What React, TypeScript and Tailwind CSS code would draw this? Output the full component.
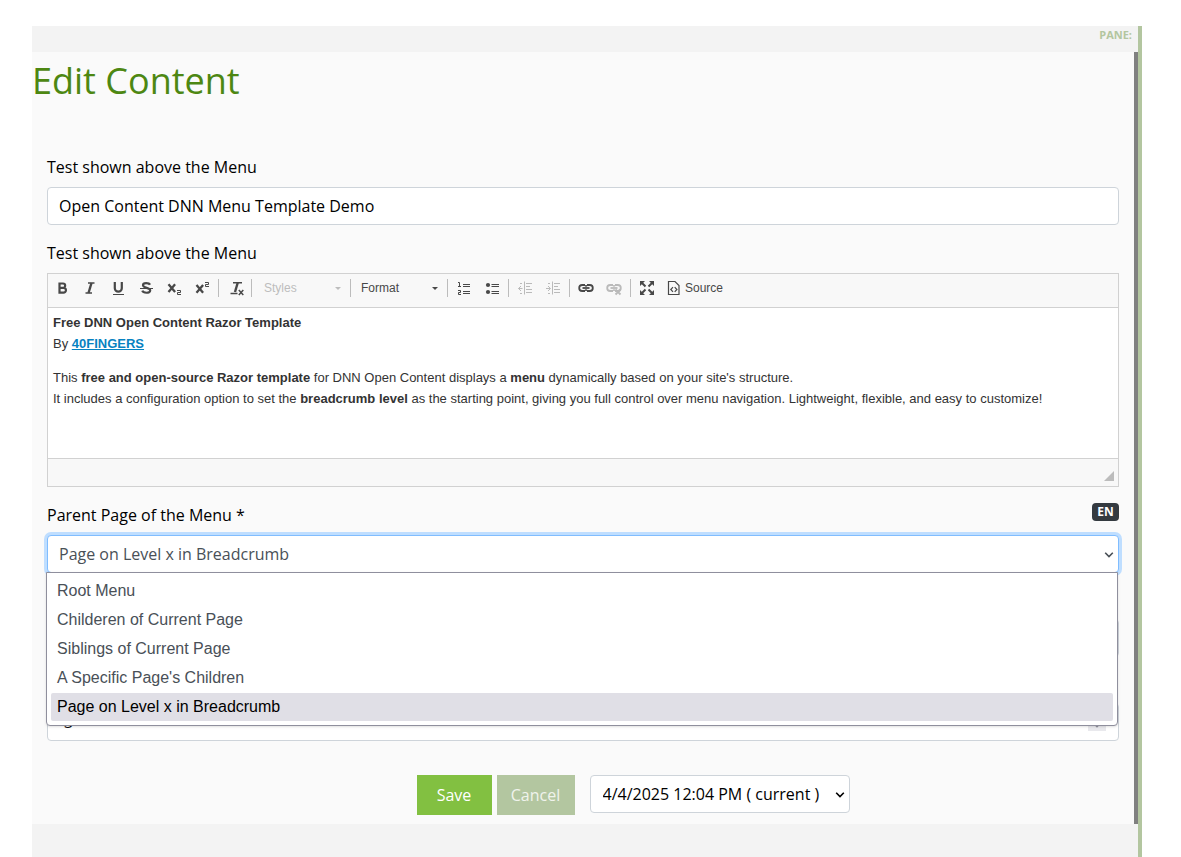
import React from "react";

const fontBody = "font-['Open_Sans',sans-serif]";

function Tool({ label, children, className = "" }: { label: string; children: React.ReactNode; className?: string }) {
  return (
    <button type="button" aria-label={label} className={`flex h-[18px] w-7 shrink-0 items-center justify-center ${className}`}>
      <svg width="16" height="16" viewBox="0 0 16 16" fill="none" stroke="#484848" strokeWidth="1">
        {children}
      </svg>
    </button>
  );
}

function Sep({ className = "" }: { className?: string }) {
  return <span className={`h-[18px] w-px shrink-0 bg-[#bcbcbc] ${className}`} />;
}

function Chevron({ className = "" }: { className?: string }) {
  return (
    <svg width="10" height="10" viewBox="0 0 10 10" fill="none" stroke="currentColor" strokeWidth="1.6" className={className}>
      <path d="M1.2 2.700 5 6.500l3.800-3.800" />
    </svg>
  );
}

function Combo({ label, className }: { label: string; className: string }) {
  return (
    <button type="button" className={`flex h-[18px] items-center justify-between text-xs ${className}`}>
      <span>{label}</span>
      <svg width="6" height="3" viewBox="0 0 6 3" fill="currentColor">
        <path d="M0 0h6L3 3z" />
      </svg>
    </button>
  );
}

function LinkShape() {
  return (
    <>
      <path d="M7 5H4.200a3 3 0 0 0 0 6H7M9 5h2.800a3 3 0 0 1 0 6H9" strokeWidth="1.800" />
      <path d="M7.400 5v1.700M8.600 5v1.700M7.400 9.300V11M8.600 9.300V11" strokeWidth="1" />
      <path d="M4.500 8h7" strokeWidth="1.800" />
    </>
  );
}

function Toolbar() {
  return (
    <div className="flex h-[34px] items-center border-b border-[#d1d1d1] bg-[#f8f8f8] pb-[5px]">
      <Tool label="Bold">
        <path d="M5.500 3.500H9a2.100 2.100 0 0 1 0 4.300H5.500zM5.500 7.800h4a2.400 2.400 0 0 1 0 4.900h-4z" strokeWidth="2.200" />
      </Tool>
      <Tool label="Italic">
        <path d="M6 3h6.500M3.500 13H10" strokeWidth="1.500" />
        <path d="M9.500 3 6.500 13" strokeWidth="2.400" />
      </Tool>
      <Tool label="Underline">
        <path d="M4.800 2v6.200a3.500 3.500 0 0 0 7 0V2" strokeWidth="2.200" />
        <path d="M3 14.500h11" />
      </Tool>
      <Tool label="Strikethrough">
        <path d="M12 4.800C11 2.600 5 2.200 5 5.200c0 3 7.200 2.300 7.200 5.200 0 3.300-7 2.900-7.900.3" strokeWidth="2.200" />
        <path d="M2 8.500h13" />
      </Tool>
      <Tool label="Subscript">
        <path d="m2.500 4.300 6.600 7.700M9.100 4.300 2.500 12" strokeWidth="2.300" />
        <path d="M11 10.500h3.500v2H11.500v2H15" />
      </Tool>
      <Tool label="Superscript">
        <path d="m2.500 5 6.600 7.700M9.100 5 2.500 12.700" strokeWidth="2.300" />
        <path d="M11 2.500h3.500v2H11.500v2H15" />
      </Tool>
      <Sep className="ml-0.5" />
      <Tool label="Remove format" className="ml-1">
        <path d="M4 2.700h9M1.500 13.500h7" strokeWidth="1.600" />
        <path d="M8.800 2.500 6 12" strokeWidth="2.400" />
        <path d="m9.800 10 4.500 5M14.300 10l-4.500 5" strokeWidth="1.500" />
      </Tool>
      <Sep />
      <Combo label="Styles" className="w-[98px] pr-[9px] pl-3 text-[#bdbdbd]" />
      <Sep />
      <Combo label="Format" className="w-[96px] pr-[9px] pl-2.5 text-[#484848]" />
      <Sep />
      <Tool label="Numbered list" className="ml-0.5">
        <path d="M7 4.500h7M7 6.500h7M7 11.500h7M7 13.500h7" strokeWidth="1.200" />
        <path d="M2 2.500h1.500v4M2 6.500h3M2 10.500h2.500v2H2.500v2H5" />
      </Tool>
      <Tool label="Bulleted list">
        <path d="M7.500 4.500H15M7.500 6.500H15M7.500 11.500H15M7.500 13.500H15" strokeWidth="1.200" />
        <circle cx="4" cy="5" r="2.100" fill="#484848" stroke="none" />
        <circle cx="4" cy="12" r="2.100" fill="#484848" stroke="none" />
      </Tool>
      <Sep className="ml-0.5" />
      <Tool label="Decrease indent" className="ml-0.5 opacity-35">
        <path d="M7.500 1.500v13M9 3.500h6M9 6.500h4M9 9.500h6M9 12.500h6M1.500 8.500h4M4 6l-2.500 2.500L4 11M3 3.500h2M3 13.500h2" />
      </Tool>
      <Tool label="Increase indent" className="opacity-35">
        <path d="M7.500 1.500v13M9 3.500h6M9 6.500h4M9 9.500h6M9 12.500h6M1 8.500h4M3 6l2.500 2.500L3 11M3 3.500h2M3 13.500h2" />
      </Tool>
      <Sep className="ml-0.5" />
      <Tool label="Link" className="ml-0.5">
        <LinkShape />
      </Tool>
      <Tool label="Unlink" className="opacity-35">
        <LinkShape />
        <path d="m9.500 9.500 5 5M14.500 9.500l-5 5" strokeWidth="1.800" />
      </Tool>
      <Sep className="ml-0.5" />
      <Tool label="Maximize" className="ml-0.5">
        <path d="M2.500 2.500 6.500 6.500M13.500 2.500l-4 4M2.500 13.500l4-4M13.500 13.500l-4-4" strokeWidth="2" />
        <path d="M1 1h5L1 6zM15 1h-5l5 5zM1 15h5l-5-5zM15 15h-5l5-5z" fill="#484848" stroke="none" />
      </Tool>
      <button type="button" className="flex h-[18px] items-center gap-[3px] pl-[5px] text-xs text-[#484848]">
        <svg width="16" height="16" viewBox="0 0 16 16" fill="none" stroke="#484848" strokeWidth="1.200">
          <path d="M2.500 1.500H9l4 4v9H2.500zM7 7.200 4.800 9.500 7 11.800M8.700 7.200l2.200 2.300-2.200 2.300" />
        </svg>
        <span>Source</span>
      </button>
    </div>
  );
}

const options = [
  "Root Menu",
  "Childeren of Current Page",
  "Siblings of Current Page",
  "A Specific Page's Children",
  "Page on Level x in Breadcrumb",
];

export default function App() {
  const [parent, setParent] = React.useState(options[4]);
  return (
    <div className={`mr-[39px] ml-8 flex min-h-screen flex-col bg-white pt-[26px] text-base text-black ${fontBody}`}>
      <div className="flex flex-1 flex-col border-r-4 border-[#b3c6a0] bg-[#f3f3f3]">
        <div className="h-[26px] pr-1.5 text-right text-[11px] leading-[18px] font-bold text-[#b3c6a0]">PANE:</div>
        <form className="border-r-4 border-[#808080] bg-[#fafafa] pb-[9px]" onSubmit={(e) => e.preventDefault()}>
          <h1 className="h-[103px] pt-1.5 text-4xl leading-[46px] text-[#4d8712]">Edit Content</h1>
          <div className="px-[15px]">
            <label htmlFor="heading" className="block h-8 leading-6">Test shown above the Menu</label>
            <input
              id="heading"
              defaultValue="Open Content DNN Menu Template Demo"
              className="block h-[38px] w-full rounded border border-[#ced4da] bg-white px-[11px]"
            />
            <div className="mt-4 h-8 leading-6">Test shown above the Menu</div>
            <div className="border border-[#d1d1d1] bg-white font-['Liberation_Sans',Arial,sans-serif]">
              <Toolbar />
              <div className="h-[150px] px-[5px] pt-1 text-[13px] leading-[21px] text-[#333]">
                <p>
                  <strong>Free DNN Open Content Razor Template</strong>
                  <br />
                  By <a href="#" className="font-bold text-[#0782c1] underline">40FINGERS</a>
                </p>
                <p className="mt-[13px]">
                  This <strong>free and open-source Razor template</strong> for DNN Open Content displays a <strong>menu</strong> dynamically based on your site's structure.
                  <br />
                  It includes a configuration option to set the <strong>breadcrumb level</strong> as the starting point, giving you full control over menu navigation. Lightweight, flexible, and easy to customize!
                </p>
              </div>
              <div className="flex h-7 items-end justify-end border-t border-[#d1d1d1] bg-[#f8f8f8] pr-1 pb-[5px]">
                <svg width="10" height="10" viewBox="0 0 10 10" fill="#bcbcbc">
                  <path d="M10 0v10H0z" />
                </svg>
              </div>
            </div>
            <div className="mt-4 flex h-8 items-start justify-between">
              <label htmlFor="parent" className="leading-6">Parent Page of the Menu *</label>
              <span className="flex h-[18px] w-[27px] items-center justify-center rounded bg-[#343a40] text-xs font-bold text-white">EN</span>
            </div>
            <div className="relative">
              <select
                id="parent"
                value={parent}
                onChange={(e) => setParent(e.target.value)}
                className="block h-[38px] w-full appearance-none rounded border border-[#80bdff] bg-white px-[11px] text-[#495057] ring-3 ring-[#bfdeff] outline-none"
              >
                {options.map((o) => (
                  <option key={o}>{o}</option>
                ))}
              </select>
              <Chevron className="pointer-events-none absolute top-[15px] right-[5px] text-[#495057]" />
              <ul className="absolute top-[37px] right-px -left-px z-10 flex flex-col gap-px rounded-b border border-[#8f8f9d] bg-white p-1 font-['Liberation_Sans',Arial,sans-serif] text-[#495057] shadow-sm">
                {options.map((o) => (
                  <li key={o} className={`h-7 rounded-xs px-1.5 leading-7 ${o === parent ? "bg-[#e0dfe6] text-black" : ""}`}>
                    {o}
                  </li>
                ))}
              </ul>
            </div>
            <div className="mt-[46px] h-[38px] rounded border border-[#ced4da] bg-white" />
            <div className="relative mt-[46px]">
              <input
                type="number"
                aria-label="Level"
                defaultValue="3"
                className="block h-[38px] w-full appearance-none rounded border border-[#ced4da] bg-white px-4 [&::-webkit-inner-spin-button]:appearance-none"
              />
              <span className="absolute top-[17px] right-[13px] flex h-[11px] w-[18px] items-start justify-center bg-[#e9e9ed] text-[#8f8f9d]">
                <Chevron />
              </span>
            </div>
          </div>
          <div className="mt-[34px] flex items-start justify-center pl-[100px]">
            <button type="submit" className="h-10 w-[75px] bg-[#82c041] text-white">Save</button>
            <button type="button" className="ml-[5px] h-10 w-[78px] bg-[#b3c6a0] text-[#f0f3ec]">Cancel</button>
            <div className="relative ml-[15px]">
              <select aria-label="Version" className="h-[38px] w-[260px] appearance-none rounded border border-[#ced4da] bg-white px-3">
                <option>4/4/2025 12:04 PM ( current )</option>
              </select>
              <Chevron className="pointer-events-none absolute top-[15px] right-[5px]" />
            </div>
          </div>
        </form>
      </div>
    </div>
  );
}
